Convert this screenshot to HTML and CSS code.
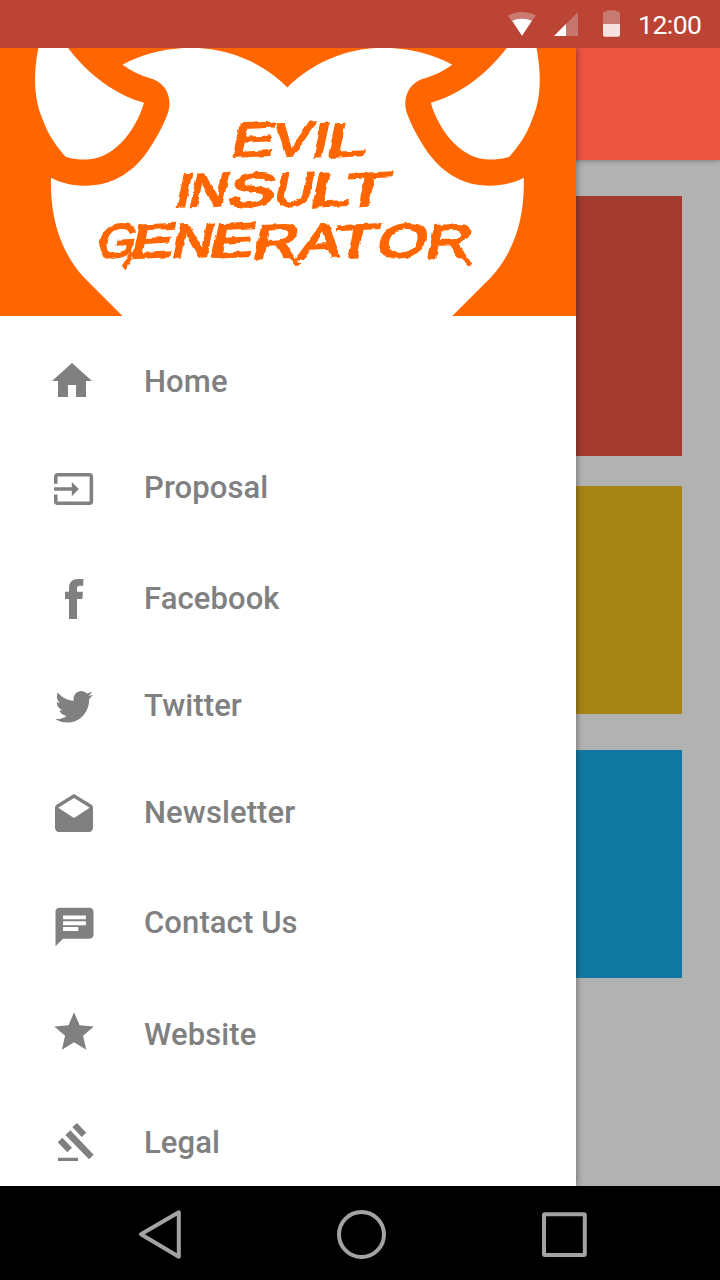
FILE: index.html
```html
<!DOCTYPE html>
<html lang="en">
<head>
<meta charset="utf-8">
<title>Evil Insult Generator</title>
<link rel="stylesheet" href="styles.css">
</head>
<body>
<div class="phone">
  <header class="status">
    <svg class="status-icons" viewBox="0 0 138 48" aria-hidden="true">
      <path fill="#c97b72" d="M8 15.5C16 10.8 28 10.8 36 15.5L22 35.8z"/>
      <path fill="#fff" d="M12.2 20.8C18 18 26 18 31.8 20.8L22 35.8z"/>
      <path fill="#c6766c" d="M54 36L78 12v24z"/>
      <path fill="#fff" d="M54 36L66 24v12z"/>
      <path fill="#c77a71" d="M103 13.5q0-2 2-2h2v-1.300h9v1.300h2q2 0 2 2V24h-17z"/>
      <path fill="#f4e3e1" d="M103 24h17v10.800q0 2-2 2h-13q-2 0-2-2z"/>
    </svg>
    <span class="clock">12:00</span>
  </header>
  <div class="screen">
    <div class="toolbar"></div>
    <main class="cards">
      <div class="card card-red"></div>
      <div class="card card-gold"></div>
      <div class="card card-blue"></div>
    </main>
    <aside class="drawer">
      <svg class="logo" viewBox="0 48 576 268" role="img" aria-label="Evil Insult Generator">
        <defs>
          <g id="half">
            <path d="M122.500 64.800C142 54 166 47.800 192 47.800C230 48 264 64 287.400 87.400L288.500 88.500V316H122.500L84 277.500C60 251 50 218 51 177.700C62 183.500 74 185.700 85 185.700C112 185.700 131 173 145 155C157 139 167 118 169 109C171.500 96 165 82 150 78.300C140 75.500 131 71 122.500 64.800z"/>
            <path d="M38.300 48C33 75 34 100 42.500 119C48 135 57 147 65.500 156.700C73 159 79 159.500 85 159.500C98 159.500 110 154 121 143C131 133 140 117 144 102.700C115 95 88 74 68 48z"/>
          </g>
          <filter id="rough" x="-5%" y="-10%" width="110%" height="120%">
            <feTurbulence type="fractalNoise" baseFrequency=".11" numOctaves="2" seed="4"/>
            <feDisplacementMap in="SourceGraphic" scale="4" xChannelSelector="R" yChannelSelector="G"/>
          </filter>
        </defs>
        <g fill="#fff">
          <use href="#half"/>
          <use href="#half" transform="translate(574.800 0) scale(-1 1)"/>
        </g>
        <g class="lettering" filter="url(#rough)">
          <g transform="translate(0 157) skewX(-12) skewY(-3)">
            <text x="229" y="12" textLength="42" lengthAdjust="spacingAndGlyphs">E</text>
            <text x="271" y="14" textLength="37" lengthAdjust="spacingAndGlyphs">V</text>
            <text x="310" y="16" textLength="16" lengthAdjust="spacingAndGlyphs">I</text>
            <text x="324" y="17" textLength="40" lengthAdjust="spacingAndGlyphs">L</text>
          </g>
          <g transform="translate(0 207) skewX(-12) skewY(-3)">
            <text x="173" y="9" textLength="16" lengthAdjust="spacingAndGlyphs">I</text>
            <text x="187" y="10" textLength="38" lengthAdjust="spacingAndGlyphs">N</text>
            <text x="226" y="12" textLength="46" lengthAdjust="spacingAndGlyphs">S</text>
            <text x="272" y="14" textLength="38" lengthAdjust="spacingAndGlyphs">U</text>
            <text x="308" y="16" textLength="40" lengthAdjust="spacingAndGlyphs">L</text>
            <text x="342" y="18" textLength="43" lengthAdjust="spacingAndGlyphs">T</text>
          </g>
          <g transform="translate(0 258) skewX(-12) skewY(-3)">
            <text x="95" y="5" textLength="38" lengthAdjust="spacingAndGlyphs">G</text>
            <text x="129" y="7" textLength="42" lengthAdjust="spacingAndGlyphs">E</text>
            <text x="170" y="9" textLength="40" lengthAdjust="spacingAndGlyphs">N</text>
            <text x="208" y="11" textLength="43" lengthAdjust="spacingAndGlyphs">E</text>
            <text x="251" y="14" textLength="44" lengthAdjust="spacingAndGlyphs">R</text>
            <text x="297" y="16" textLength="41" lengthAdjust="spacingAndGlyphs">A</text>
            <text x="331" y="18" textLength="43" lengthAdjust="spacingAndGlyphs">T</text>
            <text x="375" y="20" textLength="49" lengthAdjust="spacingAndGlyphs">O</text>
            <text x="424" y="23" textLength="44" lengthAdjust="spacingAndGlyphs">R</text>
          </g>
          <path d="M133 252L123 269M290 255l9 10M460 255l11 10" fill="none" stroke="#ff6600" stroke-width="4"/>
        </g>
      </svg>
      <nav class="menu">
        <a class="item home"><svg class="icon" viewBox="0 0 48 48"><path transform="scale(2)" d="M10 20v-6h4v6h5v-8h3L12 3 2 12h3v8z"/></svg><span class="label">Home</span></a>
        <a class="item proposal"><svg class="icon" viewBox="0 0 48 48"><path transform="translate(4.200 4.700) scale(1.780)" d="M21 3.010H3c-1.100 0-2 .9-2 2V9h2V4.990h18v14.030H3V15H1v4.010c0 1.100.9 1.980 2 1.980h18c1.100 0 2-.88 2-1.980v-14c0-1.110-.9-2-2-2zM11 16l4-4-4-4v3H1v2h10v3z"/></svg><span class="label">Proposal</span></a>
        <a class="item facebook"><svg class="icon" viewBox="0 0 48 48"><path transform="translate(-8 -9) scale(.33333)" d="M130 42V62H119Q111 62 111 70V80H129L127 102H111V162H87V102H75V80H87V68Q87 42 115 42z"/></svg><span class="label">Facebook</span></a>
        <a class="item twitter"><svg class="icon" viewBox="0 0 48 48"><path transform="translate(7.300 6.350) scale(1.570 1.620)" d="M23.954 4.569c-.885.389-1.830.654-2.825.775 1.014-.611 1.794-1.574 2.163-2.723-.951.555-2.005.959-3.127 1.184-.896-.959-2.173-1.559-3.591-1.559-2.717 0-4.920 2.203-4.920 4.917 0 .39.045.765.127 1.124C7.691 8.094 4.066 6.130 1.640 3.161c-.427.722-.666 1.561-.666 2.475 0 1.710.87 3.213 2.188 4.096-.807-.026-1.566-.248-2.228-.616v.061c0 2.385 1.693 4.374 3.946 4.827-.413.111-.849.171-1.296.171-.314 0-.615-.03-.916-.086.631 1.953 2.445 3.377 4.604 3.417-1.680 1.319-3.809 2.105-6.102 2.105-.39 0-.779-.023-1.170-.067 2.189 1.394 4.768 2.209 7.557 2.209 9.054 0 13.999-7.496 13.999-13.986 0-.209 0-.42-.015-.63.961-.689 1.800-1.560 2.460-2.548z"/></svg><span class="label">Twitter</span></a>
        <a class="item newsletter"><svg class="icon" viewBox="0 0 48 48"><path transform="translate(3.200 4) scale(1.900 2)" d="M21.990 8c0-.72-.37-1.350-.94-1.700L12 1 2.950 6.300C2.380 6.650 2 7.280 2 8v10c0 1.100.9 2 2 2h16c1.100 0 2-.9 2-2l-.01-10zM12 13L3.740 7.840 12 3l8.260 4.840L12 13z"/></svg><span class="label">Newsletter</span></a>
        <a class="item contact"><svg class="icon" viewBox="0 0 48 48"><path transform="translate(3.700 5.900) scale(1.900 1.930)" d="M20 2H4c-1.100 0-1.990.9-1.990 2L2 22l4-4h14c1.100 0 2-.9 2-2V4c0-1.100-.9-2-2-2zM6 9h12v2H6V9zm8 5H6v-2h8v2zm4-6H6V6h12v2z"/></svg><span class="label">Contact Us</span></a>
        <a class="item website"><svg class="icon" viewBox="0 0 48 48"><path transform="translate(2.300 -1.700) scale(1.980 1.970)" d="M12 17.270L18.180 21l-1.640-7.030L22 9.240l-7.190-.61L12 2 9.190 8.630 2 9.240l5.460 4.730L5.820 21z"/></svg><span class="label">Website</span></a>
        <a class="item legal"><svg class="icon" viewBox="0 0 48 48"><path transform="translate(-8 -118) scale(.33333)" d="M76 405L91 391L161 464L147 478zM97 381L111 369L139 398L125 411zM53 427L67 413L96 443L82 457zM54 473H114V483H54z"/></svg><span class="label">Legal</span></a>
      </nav>
    </aside>
  </div>
  <footer class="navbar">
    <svg viewBox="0 0 720 94" fill="none" stroke="#a3a3a3" stroke-width="4" stroke-linejoin="round" aria-hidden="true">
      <path d="M141 48.300L178.800 26.300V70.700z"/>
      <circle cx="361.500" cy="48.500" r="22.500"/>
      <rect x="544" y="28.300" width="40.800" height="40.800" rx="1"/>
    </svg>
  </footer>
</div>
</body>
</html>
```
FILE: styles.css
```css
body {
  margin: 0;
  font-family: Roboto, "Liberation Sans", sans-serif;
}

.phone {
  display: flex;
  flex-direction: column;
  width: 720px;
  height: 1280px;
  overflow: hidden;
}

.status {
  display: flex;
  flex: none;
  align-items: center;
  height: 48px;
  padding-left: 500px;
  background: #bc4434;
  color: #fff;
}

.status-icons {
  flex: none;
  width: 138px;
  height: 48px;
}

.clock {
  padding-top: 1px;
  font-size: 26.5px;
  line-height: 47px;
  letter-spacing: -0.5px;
}

.screen {
  position: relative;
  flex: 1;
  overflow: hidden;
  background: #b2b2b2;
}

.toolbar {
  height: 112px;
  background: #ed5543;
  box-shadow: 0 1px 5px rgba(0, 0, 0, 0.3);
}

.cards {
  display: flex;
  flex-direction: column;
  padding: 36px 38px;
}

.card {
  height: 228px;
}

.card-red {
  height: 260px;
  margin-bottom: 30px;
  background: #a23b2e;
}

.card-gold {
  margin-bottom: 36px;
  background: #a68516;
}

.card-blue {
  background: #11799f;
}

.drawer {
  position: absolute;
  top: 0;
  bottom: 0;
  left: 0;
  width: 576px;
  background: #fff;
  box-shadow: 0 0 7px rgba(0, 0, 0, 0.45);
}

.logo {
  display: block;
  width: 576px;
  height: 268px;
  background: #ff6600;
}

.lettering {
  fill: #ff6600;
  stroke: #ff6600;
  stroke-width: 2.4px;
  font-family: "Liberation Sans", sans-serif;
  font-size: 47px;
}

.menu {
  display: flex;
  flex-direction: column;
  padding: 41px 48px 0;
}

.item {
  display: flex;
  flex: none;
  align-items: center;
  gap: 48px;
  height: 48px;
  color: #808080;
  font-size: 31px;
  font-weight: 500;
  letter-spacing: 0.1px;
}

.label {
  padding-top: 2px;
  line-height: 46px;
}

.icon {
  flex: none;
  width: 48px;
  height: 48px;
  overflow: visible;
  fill: #808080;
}

.proposal {
  margin-top: 58px;
}

.facebook {
  margin-top: 63px;
}

.twitter,
.newsletter {
  margin-top: 59px;
}

.contact {
  margin-top: 62px;
}

.website {
  margin-top: 64px;
}

.legal {
  margin-top: 60px;
}

.navbar {
  flex: none;
  height: 94px;
  background: #000;
}

.navbar svg {
  display: block;
  width: 720px;
  height: 94px;
}
```
